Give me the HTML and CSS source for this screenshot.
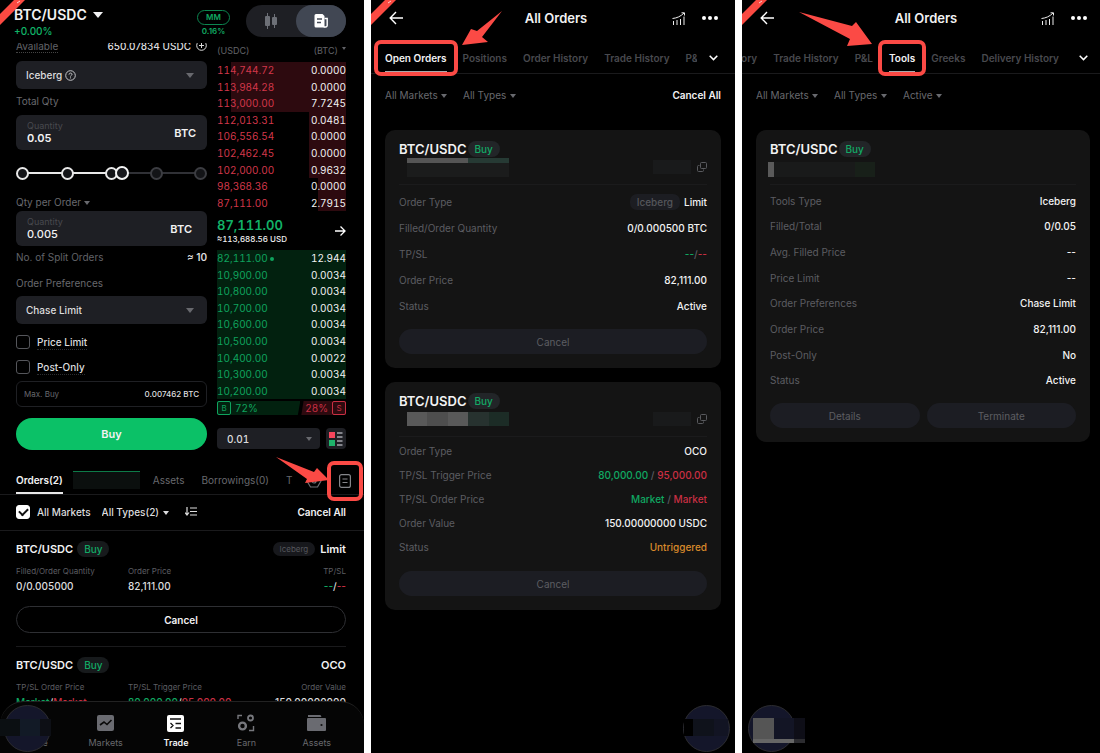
FILE: index.html
```html
<!DOCTYPE html>
<html lang="en">
<head>
  <meta charset="UTF-8" />
  <meta name="viewport" content="width=device-width, initial-scale=1.0"/>
  <title>Iceberg Orders Guide</title>
  <link rel="stylesheet" href="styles.css">
</head>
<body>

  <main class="screens">

    <!-- Trade screen -->
    <section class="screen trade">
      <svg class="ribbon" viewBox="0 0 26 26"><path d="M14 0H25L0 25V14Z" fill="#fb4a42"/><path d="M17 3l3-2" stroke="#ffd0cc"/></svg>

      <header class="trade-header">
        <div>
          <button class="pair-btn">BTC/USDC <span class="caret"></span></button>
          <div class="change">+0.00%</div>
        </div>
        <div class="mm"><span class="mm-pill">MM</span><span>0.16%</span></div>
        <div class="view-toggle">
          <button aria-label="Chart">
            <svg width="14" height="16" viewBox="0 0 14 16" fill="#6d7077"><rect x="1" y="3" width="5" height="10" rx="1"/><rect x="3" y="0" width="1" height="16"/><rect x="8" y="4" width="5" height="8" rx="1"/><rect x="10" y="1" width="1" height="14"/></svg>
          </button>
          <button class="active" aria-label="Order form">
            <svg width="16" height="16" viewBox="0 0 16 16"><path d="M3 1h6.500l2 2v11.500H3a1.500 1.500 0 0 1-1.500-1.500V2.500A1.500 1.500 0 0 1 3 1Z" fill="#fff"/><path d="M11.500 5.500h2.700v7a1.500 1.500 0 0 1-1.500 1.500h-2" fill="none" stroke="#fff" stroke-width="1.400"/><path d="M4 6h5M4 9.500h4" stroke="#454b57" stroke-width="1.300"/></svg>
          </button>
        </div>
      </header>

      <div class="trade-body">
        <div class="columns">
          <form class="order-form">
            <div class="line available">
              <span class="dotted">Available</span>
              <span class="bright">650.07834 USDC
                <svg width="11" height="11" viewBox="0 0 11 11" fill="none" stroke="#ddd"><circle cx="5.500" cy="5.500" r="4.800"/><path d="M5.500 3v5M3 5.500h5"/></svg>
              </span>
            </div>

            <div class="picker">
              <select aria-label="Order type"><option>Iceberg</option></select>
              <svg class="help" width="11" height="11" viewBox="0 0 11 11" fill="none" stroke="#c4c5c8"><circle cx="5.500" cy="5.500" r="4.800"/><path d="M4 4.600c0-2 3-2 3-.2 0 1-1.500 1-1.500 2.100M5.500 7.400v1"/></svg>
              <span class="caret dim"></span>
            </div>

            <div class="form-label">Total Qty</div>
            <div class="qty-box">
              <div class="qty-field"><label for="total">Quantity</label><input id="total" class="strong" value="0.05"></div>
              <span class="unit">BTC</span>
            </div>

            <div class="slider">
              <div class="ticks"><span class="on"></span><span class="on"></span><span class="on"></span><span></span><span></span></div>
              <input type="range" min="0" max="100" value="56" aria-label="Share of balance">
            </div>

            <button type="button" class="form-label per-order">Qty per Order <span class="caret small"></span></button>
            <div class="qty-box">
              <div class="qty-field"><label for="per">Quantity</label><input id="per" value="0.005"></div>
              <span class="unit unit-in">BTC</span>
            </div>

            <div class="line split"><span>No. of Split Orders</span><span class="bright">≈ 10</span></div>

            <div class="form-label prefs">Order Preferences</div>
            <div class="picker">
              <select aria-label="Order preferences"><option>Chase Limit</option></select>
              <span class="caret dim"></span>
            </div>

            <label class="check"><input type="checkbox"><span class="dotted">Price Limit</span></label>
            <label class="check"><input type="checkbox"><span class="dotted">Post-Only</span></label>

            <div class="max-buy"><span>Max. Buy</span><b>0.007462 BTC</b></div>
            <button type="button" class="buy-btn">Buy</button>
          </form>

          <div class="book">
            <table class="asks">
              <thead><tr><th>(USDC)</th><th>(BTC)<span class="caret tiny"></span></th></tr></thead>
              <tbody>
                <tr style="--depth: 89%"><td>114,744.72</td><td>0.0000</td></tr>
                <tr style="--depth: 89%"><td>113,984.28</td><td>0.0000</td></tr>
                <tr style="--depth: 89%"><td>113,000.00</td><td>7.7245</td></tr>
                <tr style="--depth: 29%"><td>112,013.31</td><td>0.0481</td></tr>
                <tr style="--depth: 29%"><td>106,556.54</td><td>0.0000</td></tr>
                <tr style="--depth: 29%"><td>102,462.45</td><td>0.0000</td></tr>
                <tr style="--depth: 29%"><td>102,000.00</td><td>0.9632</td></tr>
                <tr style="--depth: 22%"><td>98,368.36</td><td>0.0000</td></tr>
                <tr style="--depth: 22%"><td>87,111.00</td><td>2.7915</td></tr>
              </tbody>
            </table>

            <div class="last-price">
              <div><strong>87,111.00</strong><small>≈113,688.56 USD</small></div>
              <svg width="12" height="12" viewBox="0 0 12 12" fill="none" stroke="#fff" stroke-width="1.300"><path d="M1 6h10M6.500 1.500L11 6l-4.500 4.500"/></svg>
            </div>

            <table class="bids">
              <tbody>
                <tr><td>82,111.00 <span class="dot"></span></td><td>12.944</td></tr>
                <tr><td>10,900.00</td><td>0.0034</td></tr>
                <tr><td>10,800.00</td><td>0.0034</td></tr>
                <tr><td>10,700.00</td><td>0.0034</td></tr>
                <tr><td>10,600.00</td><td>0.0034</td></tr>
                <tr><td>10,500.00</td><td>0.0034</td></tr>
                <tr><td>10,400.00</td><td>0.0022</td></tr>
                <tr><td>10,300.00</td><td>0.0034</td></tr>
                <tr><td>10,200.00</td><td>0.0034</td></tr>
              </tbody>
            </table>

            <div class="ratio">
              <div class="ratio-buy"><i>B</i>72%</div>
              <div class="ratio-sell">28%<i>S</i></div>
            </div>

            <div class="book-tools">
              <div class="picker step">
                <select aria-label="Price step"><option>0.01</option></select>
                <span class="caret dim"></span>
              </div>
              <button class="layout-btn" aria-label="Book layout">
                <svg width="14" height="14" viewBox="0 0 14 14"><rect x="0" y="0" width="6" height="6" fill="#f6465d"/><rect x="0" y="8" width="6" height="6" fill="#1fb36b"/><path d="M8 1h5.500M8 5h5.500M8 9h5.500M8 13h5.500" stroke="#a5a7ac" stroke-width="1.300"/></svg>
              </button>
            </div>
          </div>
        </div>

        <nav class="order-tabs">
          <a href="#" class="active">Orders(2)</a>
          <span class="mask mask-tab"></span>
          <a href="#">Assets</a>
          <a href="#">Borrowings(0)</a>
          <a href="#">T</a>
          <button class="hex" aria-label="Settings">
            <svg width="16" height="14" viewBox="0 0 16 14" fill="none" stroke="#6d6e73" stroke-width="1.200"><path d="M4.500 1h7L15 7l-3.500 6h-7L1 7Z"/><circle cx="8" cy="7" r="2"/></svg>
          </button>
          <button class="all-orders marked" aria-label="All orders">
            <svg width="12" height="14" viewBox="0 0 12 14" fill="none" stroke="#85868a" stroke-width="1.200"><rect x=".6" y=".6" width="10.800" height="12.800" rx="2"/><path d="M3.500 5h5M3.500 8.500h5"/></svg>
          </button>
        </nav>

        <div class="order-filter">
          <label class="check"><input type="checkbox" checked><span>All Markets</span></label>
          <label class="inline-select"><select aria-label="Types"><option>All Types(2)</option></select><span class="caret small"></span></label>
          <button aria-label="Sort">
            <svg width="12" height="9" viewBox="0 0 12 9" fill="none" stroke="#ddd" stroke-width="1.200"><path d="M2 0v8M0 5.500L2 8l2-2.500M5 1h7M5 4.500h7M5 8h7"/></svg>
          </button>
          <button class="cancel-all">Cancel All</button>
        </div>

        <article class="order">
          <div class="order-title"><b>BTC/USDC</b><span class="buy">Buy</span><span class="kind">Iceberg</span><b>Limit</b></div>
          <dl class="order-facts">
            <div><dt>Filled/Order Quantity</dt><dd>0/0.005000</dd></div>
            <div><dt>Order Price</dt><dd>82,111.00</dd></div>
            <div><dt>TP/SL</dt><dd><span class="green">--</span>/<span class="red">--</span></dd></div>
          </dl>
          <button class="cancel-outline">Cancel</button>
        </article>

        <article class="order">
          <div class="order-title"><b>BTC/USDC</b><span class="buy">Buy</span><b class="end">OCO</b></div>
          <dl class="order-facts">
            <div><dt>TP/SL Order Price</dt><dd><span class="green">Market</span>/<span class="red">Market</span></dd></div>
            <div><dt>TP/SL Trigger Price</dt><dd><span class="green">80,000.00</span>/<span class="red">95,000.00</span></dd></div>
            <div><dt>Order Value</dt><dd>150.00000000</dd></div>
          </dl>
        </article>
      </div>

      <nav class="bottom-nav">
        <a href="#"><span class="nav-icon"></span>Home</a>
        <a href="#">
          <svg width="18" height="18" viewBox="0 0 18 18"><rect x="0" y="1" width="17" height="16" rx="2" fill="#6a6b71"/><path d="M3 11l4-3 3 2.500L14.500 6" fill="none" stroke="#0a0a0a" stroke-width="1.600"/></svg>
          Markets
        </a>
        <a href="#" class="active">
          <svg width="18" height="18" viewBox="0 0 18 18"><rect x="0" y="1" width="17" height="17" rx="2" fill="#fff"/><path d="M3 5h11M8.500 9.500H14M8.500 14H14M3.500 9L6 11.500 3.500 14" fill="none" stroke="#111" stroke-width="1.300"/></svg>
          Trade
        </a>
        <a href="#">
          <svg width="18" height="18" viewBox="0 0 18 18" fill="none" stroke="#77787d"><circle cx="5.500" cy="12" r="3.400" stroke-width="2.400"/><circle cx="13.500" cy="4" r="2.500" stroke-width="1.800"/><path d="M1 5V1.500h4M16.500 12v4.500H12" stroke-width="1.400"/></svg>
          Earn
        </a>
        <a href="#">
          <svg width="20" height="18" viewBox="0 0 20 18"><path d="M1 1h12.500l1 2H1Z" fill="#6a6b71"/><rect x="0" y="4" width="19" height="13" rx="1" fill="#6a6b71"/><circle cx="14.500" cy="11" r="1.100" fill="#111"/></svg>
          Assets
        </a>
      </nav>

      <div class="bubble bubble-home"><span class="mask"></span></div>
      <svg class="arrow arrow-trade" viewBox="0 0 53 27"><path d="M0 0L38 15 41 11 53 23 29 26 31 22Z"/></svg>
    </section>

    <!-- All orders: open -->
    <section class="screen">
      <svg class="ribbon" viewBox="0 0 26 26"><path d="M14 0H25L0 25V14Z" fill="#fb4a42"/><path d="M17 3l3-2" stroke="#ffd0cc"/></svg>

      <header class="page-header">
        <a href="#" aria-label="Back"><svg width="15" height="14" viewBox="0 0 15 14" fill="none" stroke="#fff" stroke-width="1.400"><path d="M14 7H1.500M7 1L1.200 7 7 13"/></svg></a>
        <h1>All Orders</h1>
        <button aria-label="Statistics"><svg width="14" height="13" viewBox="0 0 14 13" fill="none" stroke="#eee"><path d="M1.500 9v4M5 8v5M8.500 7v6M12 4.500V13M.5 6.500C5 6 8.500 4.500 12 1M9.500.8h3v2.700"/></svg></button>
        <button aria-label="More"><svg width="18" height="4" viewBox="0 0 18 4" fill="#fff"><circle cx="3" cy="2" r="2"/><circle cx="9" cy="2" r="2"/><circle cx="15" cy="2" r="2"/></svg></button>
      </header>

      <nav class="page-tabs">
        <div class="tab-strip">
          <a href="#" class="active marked">Open Orders</a>
          <a href="#">Positions</a>
          <a href="#">Order History</a>
          <a href="#">Trade History</a>
          <a href="#">P&amp;L</a>
        </div>
        <button aria-label="More tabs"><svg width="9" height="6" viewBox="0 0 9 6" fill="none" stroke="#fff" stroke-width="1.500"><path d="M.7.8l3.800 3.800L8.300.8"/></svg></button>
      </nav>

      <div class="page-filter">
        <label class="inline-select"><select aria-label="Markets"><option>All Markets</option></select><span class="caret small"></span></label>
        <label class="inline-select"><select aria-label="Types"><option>All Types</option></select><span class="caret small"></span></label>
        <button class="cancel-all">Cancel All</button>
      </div>

      <div class="cards">
        <article class="card">
          <div class="card-title"><b>BTC/USDC</b><span class="buy">Buy</span></div>
          <div class="card-meta">
            <span class="mask mask-thin"></span>
            <span class="mask mask-right"></span>
            <button aria-label="Copy"><svg width="10" height="10" viewBox="0 0 10 10" fill="none" stroke="#595a5e"><rect x="3.500" y=".5" width="6" height="6" rx="1"/><path d="M2.500 3.500h-1a1 1 0 0 0-1 1v4a1 1 0 0 0 1 1h4a1 1 0 0 0 1-1v-1"/></svg></button>
          </div>
          <dl class="details">
            <div><dt>Order Type</dt><dd><span class="kind">Iceberg</span>Limit</dd></div>
            <div><dt>Filled/Order Quantity</dt><dd>0/0.000500 BTC</dd></div>
            <div><dt>TP/SL</dt><dd class="slash"><span class="green">--</span>/<span class="red">--</span></dd></div>
            <div><dt>Order Price</dt><dd>82,111.00</dd></div>
            <div><dt>Status</dt><dd>Active</dd></div>
          </dl>
          <div class="card-actions"><button>Cancel</button></div>
        </article>

        <article class="card">
          <div class="card-title"><b>BTC/USDC</b><span class="buy">Buy</span></div>
          <div class="card-meta">
            <span class="mask mask-full"></span>
            <span class="mask mask-right"></span>
            <button aria-label="Copy"><svg width="10" height="10" viewBox="0 0 10 10" fill="none" stroke="#595a5e"><rect x="3.500" y=".5" width="6" height="6" rx="1"/><path d="M2.500 3.500h-1a1 1 0 0 0-1 1v4a1 1 0 0 0 1 1h4a1 1 0 0 0 1-1v-1"/></svg></button>
          </div>
          <dl class="details tight">
            <div><dt>Order Type</dt><dd>OCO</dd></div>
            <div><dt>TP/SL Trigger Price</dt><dd class="slash"><span class="green">80,000.00</span> / <span class="red">95,000.00</span></dd></div>
            <div><dt>TP/SL Order Price</dt><dd class="slash"><span class="green">Market</span> / <span class="red">Market</span></dd></div>
            <div><dt>Order Value</dt><dd>150.00000000 USDC</dd></div>
            <div><dt>Status</dt><dd class="orange">Untriggered</dd></div>
          </dl>
          <div class="card-actions"><button>Cancel</button></div>
        </article>
      </div>

      <div class="bubble bubble-right"><span class="mask"></span></div>
      <svg class="arrow arrow-open" viewBox="0 0 40 34"><path d="M40 0L20 26 26 31 0 34 9 18 15 20Z"/></svg>
    </section>

    <!-- All orders: tools -->
    <section class="screen tools">
      <svg class="ribbon" viewBox="0 0 26 26"><path d="M14 0H25L0 25V14Z" fill="#fb4a42"/><path d="M17 3l3-2" stroke="#ffd0cc"/></svg>

      <header class="page-header">
        <a href="#" aria-label="Back"><svg width="15" height="14" viewBox="0 0 15 14" fill="none" stroke="#fff" stroke-width="1.400"><path d="M14 7H1.500M7 1L1.200 7 7 13"/></svg></a>
        <h1>All Orders</h1>
        <button aria-label="Statistics"><svg width="14" height="13" viewBox="0 0 14 13" fill="none" stroke="#eee"><path d="M1.500 9v4M5 8v5M8.500 7v6M12 4.500V13M.5 6.500C5 6 8.500 4.500 12 1M9.500.8h3v2.700"/></svg></button>
        <button aria-label="More"><svg width="18" height="4" viewBox="0 0 18 4" fill="#fff"><circle cx="3" cy="2" r="2"/><circle cx="9" cy="2" r="2"/><circle cx="15" cy="2" r="2"/></svg></button>
      </header>

      <nav class="page-tabs">
        <div class="tab-strip scrolled">
          <a href="#">Order History</a>
          <a href="#">Trade History</a>
          <a href="#">P&amp;L</a>
          <a href="#" class="active marked">Tools</a>
          <a href="#">Greeks</a>
          <a href="#">Delivery History</a>
        </div>
        <button aria-label="More tabs"><svg width="9" height="6" viewBox="0 0 9 6" fill="none" stroke="#fff" stroke-width="1.500"><path d="M.7.8l3.800 3.800L8.300.8"/></svg></button>
      </nav>

      <div class="page-filter">
        <label class="inline-select"><select aria-label="Markets"><option>All Markets</option></select><span class="caret small"></span></label>
        <label class="inline-select"><select aria-label="Types"><option>All Types</option></select><span class="caret small"></span></label>
        <label class="inline-select"><select aria-label="Status"><option>Active</option></select><span class="caret small"></span></label>
      </div>

      <div class="cards">
        <article class="card">
          <div class="card-title"><b>BTC/USDC</b><span class="buy">Buy</span></div>
          <div class="card-meta"><span class="mask mask-tools"></span></div>
          <dl class="details long">
            <div><dt>Tools Type</dt><dd>Iceberg</dd></div>
            <div><dt>Filled/Total</dt><dd>0/0.05</dd></div>
            <div><dt>Avg. Filled Price</dt><dd>--</dd></div>
            <div><dt>Price Limit</dt><dd>--</dd></div>
            <div><dt>Order Preferences</dt><dd>Chase Limit</dd></div>
            <div><dt>Order Price</dt><dd>82,111.00</dd></div>
            <div><dt>Post-Only</dt><dd>No</dd></div>
            <div><dt>Status</dt><dd>Active</dd></div>
          </dl>
          <div class="card-actions"><button>Details</button><button>Terminate</button></div>
        </article>
      </div>

      <div class="bubble bubble-left"><span class="mask"></span></div>
      <svg class="arrow arrow-tools" viewBox="0 0 74 35"><path d="M0 0L53 14 57 10 73 32 48 34 51 27Z"/></svg>
    </section>

  </main>

</body>
</html>
```

FILE: styles.css
```css
* {
  box-sizing: border-box;
}

body {
  margin: 0;
  background: #fff;
  color: #f2f2f3;
  font-family: Inter, "Liberation Sans", sans-serif;
  font-size: 10px;
  line-height: 14px;
}

a {
  color: inherit;
  text-decoration: none;
}

button, select, input {
  margin: 0;
  padding: 0;
  border: none;
  background: none;
  color: inherit;
  font: inherit;
}

button {
  cursor: pointer;
}

select {
  appearance: none;
}

svg {
  display: block;
}

dl, dd, h1 {
  margin: 0;
}

.screens {
  display: grid;
  grid-template-columns: 364fr 364fr 358fr;
  gap: 7px;
}

.screen {
  position: relative;
  min-width: 0;
  height: 100vh;
  overflow: hidden;
  background: #000;
}

.ribbon {
  position: absolute;
  top: 0;
  left: 0;
  width: 26px;
  height: 26px;
}

.green { color: #10a862; }
.red { color: #c92f43; }
.orange { color: #d98a2b; }

.caret {
  display: inline-block;
  border: 4px solid transparent;
  border-top: 5px solid currentColor;
  border-bottom: 0;
  vertical-align: middle;
}

.caret.dim { color: #68696e; }

.caret.small {
  border-width: 4px 3px 0;
}

.caret.tiny {
  border-width: 3px 2px 0;
}

/* ---------- trade ---------- */

.trade-header {
  display: flex;
  height: 43px;
  padding: 5px 18px 0 14px;
}

.pair-btn {
  display: block;
  font-size: 14px;
  line-height: 20px;
  font-weight: 600;
}

.pair-btn .caret {
  margin: 0 0 3px 3px;
  border-width: 6px 5px 0;
}

.change {
  line-height: 12px;
  font-weight: 500;
  color: #10b568;
}

.mm {
  display: flex;
  flex-direction: column;
  align-items: center;
  margin: 5px 16px 0 auto;
  font-size: 8px;
  line-height: 12px;
  font-weight: 600;
  color: #10a862;
}

.mm-pill {
  width: 33px;
  border: 1px solid #0c8650;
  border-radius: 8px;
  text-align: center;
  line-height: 13px;
}

.view-toggle {
  display: flex;
  width: 100px;
  height: 32px;
  border-radius: 16px;
  background: #1e1f24;
}

.view-toggle button {
  display: flex;
  flex: 1;
  align-items: center;
  justify-content: center;
  border-radius: 16px;
}

.view-toggle .active {
  background: #414753;
}

.trade-body {
  overflow: hidden;
}

.columns {
  display: grid;
  grid-template-columns: 191fr 129fr;
  gap: 10px;
  margin-top: -3px;
  padding: 0 18px 0 16px;
}

.line {
  display: flex;
  justify-content: space-between;
  color: #626368;
}

.available {
  line-height: 12px;
}

.available .bright {
  display: flex;
  gap: 5px;
}

.dotted {
  border-bottom: 1px dotted #444;
}

.bright {
  color: #dcdcde;
  font-weight: 500;
}

.picker {
  position: relative;
  display: flex;
  align-items: center;
  height: 28px;
  margin-top: 8px;
  border-radius: 6px;
  background: #1e1f24;
}

.picker select {
  width: 100%;
  height: 100%;
  padding: 0 10px;
  font-weight: 500;
  color: #dcdcde;
}

.picker .caret {
  position: absolute;
  right: 13px;
  pointer-events: none;
}

.picker .help {
  position: absolute;
  left: 49px;
}

.form-label {
  display: block;
  margin-top: 5px;
  color: #68696e;
}

.qty-box {
  display: flex;
  align-items: center;
  justify-content: space-between;
  height: 35px;
  margin-top: 7px;
  padding: 0 11px;
  border-radius: 6px;
  background: #1e1f24;
}

.qty-field {
  display: flex;
  flex-direction: column;
  min-width: 0;
}

.qty-field label {
  font-size: 9px;
  line-height: 10px;
  color: #48494e;
}

.qty-field input {
  width: 100%;
  height: 14px;
  font-size: 11px;
  font-weight: 500;
}

.qty-field .strong {
  font-weight: 600;
}

.unit {
  font-size: 11px;
  font-weight: 600;
}

.unit-in {
  margin-right: 4px;
}

.slider {
  position: relative;
  height: 14px;
  margin: 16px 0 15px;
  background: linear-gradient(to right, #e8e8e8 56%, #303136 56%) center / calc(100% - 14px) 2px no-repeat;
}

.ticks {
  position: absolute;
  inset: 0;
  display: flex;
  align-items: center;
  justify-content: space-between;
}

.ticks span {
  width: 13px;
  height: 13px;
  border: 2px solid #3c3d42;
  border-radius: 50%;
  background: #131417;
}

.ticks .on {
  border-color: #e8e8e8;
}

.slider input {
  position: relative;
  display: block;
  width: 100%;
  height: 14px;
  appearance: none;
}

.slider input::-webkit-slider-thumb {
  appearance: none;
  width: 14px;
  height: 14px;
  border: 2px solid #f4f4f4;
  border-radius: 50%;
  background: #17181c;
}

.per-order {
  margin-top: 0;
}

.per-order + .qty-box {
  margin-top: 2px;
}

.split {
  margin-top: 4px;
}

.split .bright {
  font-weight: 600;
}

.prefs {
  margin-top: 12px;
}

.prefs + .picker {
  margin-top: 6px;
}

.check {
  display: flex;
  align-items: center;
  gap: 7px;
  height: 14px;
  margin-top: 11px;
  font-weight: 500;
  color: #dcdcde;
}

.check .dotted {
  border-color: #2c2d30;
}

.check input {
  width: 14px;
  height: 14px;
  appearance: none;
  border: 1px solid #55565b;
  border-radius: 3px;
}

.check input:checked {
  display: grid;
  place-items: center;
  border-color: #fff;
  background: #fff;
}

.check input:checked::after {
  content: "";
  width: 7px;
  height: 4px;
  margin-bottom: 2px;
  border: solid #111;
  border-width: 0 0 2px 2px;
  transform: rotate(-45deg);
}

.max-buy {
  display: flex;
  align-items: center;
  justify-content: space-between;
  height: 26px;
  margin-top: 7px;
  padding: 0 7px;
  border: 1px solid #1f2024;
  border-radius: 6px;
  font-size: 8px;
  color: #68696e;
}

.max-buy b {
  color: #dcdcde;
  font-weight: 500;
}

.buy-btn {
  width: 100%;
  height: 32px;
  margin-top: 11px;
  border-radius: 16px;
  background: #0bc167;
  font-size: 11px;
  font-weight: 600;
}

/* order book */

.book {
  font-variant-numeric: tabular-nums;
}

.book table {
  width: 100%;
  border-collapse: collapse;
  line-height: 16px;
}

.book th {
  height: 22px;
  padding: 0;
  font-size: 9px;
  font-weight: 400;
  text-align: left;
  color: #626368;
}

.book th .caret {
  margin: 0 0 6px 4px;
}

.book td {
  padding: 0;
}

.book th:last-child,
.book td:last-child {
  text-align: right;
}

.asks {
  height: 171px;
}

.asks tbody tr {
  background: linear-gradient(to left, #2d0a0f var(--depth), transparent 0);
}

.asks td:first-child {
  color: #d2374a;
}

.bids {
  height: 149px;
  background: #02210f;
}

.bids td:first-child {
  color: #0fa35e;
}

.dot {
  display: inline-block;
  width: 4px;
  height: 4px;
  margin-bottom: 2px;
  border-radius: 50%;
  background: #0fa35e;
  vertical-align: middle;
}

.last-price {
  display: flex;
  align-items: center;
  justify-content: space-between;
  height: 39px;
}

.last-price strong {
  display: block;
  font-size: 13px;
  line-height: 16px;
  font-weight: 600;
  color: #12b268;
}

.last-price small {
  display: block;
  font-size: 8px;
  line-height: 12px;
  font-weight: 500;
}

.ratio {
  display: flex;
  gap: 1px;
  height: 14px;
  margin-top: 2px;
}

.ratio div {
  display: flex;
  align-items: center;
  gap: 4px;
}

.ratio i {
  width: 14px;
  height: 14px;
  border: 1px solid currentColor;
  border-radius: 2px;
  font-size: 8px;
  line-height: 12px;
  font-style: normal;
  text-align: center;
}

.ratio-buy {
  flex: 84;
  background: #02210f;
  color: #0fa35e;
  clip-path: polygon(0 0, 100% 0, 97% 100%, 0 100%);
}

.ratio-sell {
  flex: 45;
  justify-content: flex-end;
  background: #2d0a0f;
  color: #c92f43;
  clip-path: polygon(5% 0, 100% 0, 100% 100%, 0 100%);
}

.book-tools {
  display: flex;
  gap: 6px;
  margin-top: 13px;
}

.picker.step {
  flex: 1;
  height: 21px;
  margin-top: 0;
  border-radius: 4px;
}

.picker.step .caret {
  right: 8px;
  border-width: 4px 3px 0;
}

.layout-btn {
  display: flex;
  align-items: center;
  justify-content: center;
  width: 20px;
  height: 21px;
  border-radius: 4px;
  background: #1e1f24;
}

/* orders list */

.order-tabs {
  display: flex;
  align-items: flex-end;
  height: 45px;
  padding: 0 13px 0 16px;
  border-bottom: 1px solid #1a1a1c;
  color: #68696e;
}

.order-tabs a {
  margin-right: 17px;
  padding-bottom: 7px;
}

.order-tabs .active {
  margin-right: 10px;
  padding-bottom: 5px;
  border-bottom: 2px solid #e8e8e8;
  font-weight: 600;
  color: #f2f2f3;
}

.order-tabs a:last-of-type {
  margin-right: 0;
}

.mask-tab {
  width: 67px;
  height: 18px;
  margin: 0 13px 5px 0;
  border-top: 1px solid #0d7a48;
  background: #0b0f0e;
}

.hex {
  margin: 0 17px 6px auto;
}

.all-orders {
  padding-bottom: 6px;
}

/* red frame round the control to tap */
.marked {
  position: relative;
}

.marked::after {
  content: "";
  position: absolute;
  inset: -11px -11px -5px -11px;
  border: 4px solid #fb4a45;
  border-radius: 7px;
  pointer-events: none;
}

.all-orders.marked::after {
  inset: -13px -12px -7px -12px;
}

.order-filter {
  display: flex;
  align-items: center;
  height: 36px;
  padding: 0 18px 2px 16px;
  border-bottom: 1px solid #1a1a1c;
}

.order-filter .check {
  margin: 0 11px 0 0;
}

.order-filter .inline-select {
  margin-right: 16px;
  font-weight: 500;
  color: #dcdcde;
}

.cancel-all {
  margin-left: auto;
  font-weight: 600;
}

.inline-select .caret {
  margin-left: 3px;
}

.order {
  margin: 0 18px 0 16px;
  padding: 9px 0 13px;
  border-bottom: 1px solid #1a1a1c;
}

.order-title {
  display: flex;
  align-items: center;
  height: 18px;
  font-size: 11px;
}

.order-title b {
  font-weight: 600;
}

.buy {
  margin-left: 4px;
  padding: 0 7px;
  border-radius: 8px;
  background: #171a1c;
  font-size: 10px;
  line-height: 16px;
  font-weight: 500;
  color: #12a965;
}

.kind {
  margin: 0 5px 0 auto;
  padding: 0 7px;
  border-radius: 7px;
  background: #17181c;
  font-size: 8px;
  line-height: 14px;
  color: #55565b;
}

.end {
  margin-left: auto;
}

.order-facts {
  display: grid;
  grid-template-columns: 112px 1fr auto;
  margin-top: 7px;
}

.order-facts dt {
  font-size: 8px;
  line-height: 12px;
  color: #5c5d62;
}

.order-facts dd {
  margin-top: 3px;
  line-height: 12px;
  font-weight: 500;
  color: #dcdcde;
}

.order-facts div:last-child {
  text-align: right;
}

.cancel-outline {
  width: 100%;
  height: 27px;
  margin-top: 14px;
  border: 1px solid #2e2f33;
  border-radius: 14px;
  font-weight: 600;
}

.bottom-nav {
  position: absolute;
  left: 0;
  right: 0;
  bottom: 0;
  display: flex;
  height: 52px;
  padding: 12px 12px 0 0;
  border-top: 1px solid #222;
  border-radius: 24px 24px 0 0;
  background: #050505;
}

.bottom-nav a {
  display: flex;
  flex: 1;
  flex-direction: column;
  align-items: center;
  gap: 4px;
  font-size: 9px;
  line-height: 14px;
  color: #68696e;
}

.bottom-nav .active {
  font-weight: 600;
  color: #f2f2f3;
}

.nav-icon {
  height: 18px;
}

/* ---------- all orders ---------- */

.page-header {
  display: grid;
  grid-template-columns: 66px 1fr 44px 18px;
  align-items: center;
  height: 36px;
  padding: 0 16px 0 18px;
}

.page-header h1 {
  font-size: 13px;
  line-height: 18px;
  font-weight: 600;
  text-align: center;
}

.page-header button {
  justify-self: center;
}

.page-tabs {
  display: flex;
  height: 38px;
  padding: 0 17px 0 14px;
  border-bottom: 1px solid #1a1a1c;
}

.tab-strip {
  display: flex;
  flex: 1;
  gap: 16px;
  align-items: flex-end;
  min-width: 0;
  margin-right: 12px;
  white-space: nowrap;
  color: #48494e;
  font-weight: 600;
  /* cut the last tab at the edge, leave the marker free above and below */
  clip-path: inset(-20px 0 -20px -20px);
}

.tab-strip a {
  padding-bottom: 8px;
}

.tab-strip .active {
  padding-bottom: 6px;
  border-bottom: 2px solid #a9a9ac;
  color: #f2f2f3;
}

.tab-strip.scrolled {
  justify-content: flex-end;
  margin-right: 20px;
}

.page-tabs button {
  align-self: flex-end;
  padding-bottom: 12px;
}

.page-filter {
  display: flex;
  gap: 16px;
  align-items: center;
  height: 42px;
  padding: 0 14px;
  color: #68696e;
}

.page-filter .cancel-all {
  color: #f2f2f3;
}

.cards {
  display: flex;
  flex-direction: column;
  gap: 14px;
  padding: 14px 14px 0;
}

/* this screen runs a little closer to the right edge */
.tools .page-header { padding-right: 12px; }
.tools .page-tabs { padding-right: 12px; }
.tools .cards { padding-right: 10px; }

.card {
  padding: 10px 14px 14px;
  border-radius: 10px;
  background: #141414;
}

.card-title {
  display: flex;
  align-items: center;
  height: 18px;
  font-size: 13px;
}

.card-title b {
  font-weight: 600;
}

.card-title .buy {
  margin-left: 1px;
  background: #222528;
}

.card-meta {
  display: flex;
  align-items: center;
  height: 27px;
  padding-bottom: 8px;
  border-bottom: 1px solid #1b1b1c;
}

.mask {
  display: block;
}

.mask-thin,
.mask-full {
  width: 102px;
  height: 19px;
  margin-left: 8px;
  background: linear-gradient(#555, #555) 0 0 / 61px 5px no-repeat,
              linear-gradient(#263a34, #263a34) 61px 0 / 41px 5px no-repeat, #1b1c1c;
}

.mask-full {
  height: 14px;
  background: linear-gradient(to right, #595959 0 20px, #4e4e4e 20px 41px, #595959 41px 61px, #27322f 61px 82px, #1c2c26 82px);
}

.mask-right {
  width: 38px;
  height: 14px;
  margin-left: auto;
  margin-right: 6px;
  background: #191a1b;
}

.mask-tools {
  width: 107px;
  height: 15px;
  margin-top: 4px;
  margin-left: -2px;
  background: linear-gradient(to right, #5a5a5a 0 6px, #191a1a 6px 87px, #182019 87px);
}

.details {
  padding-top: 4px;
}

.details div {
  display: flex;
  align-items: center;
  justify-content: space-between;
  height: 26px;
}

.details.tight {
  padding: 2px 0;
}

.details.tight div {
  height: 24px;
}

.details.long {
  display: flex;
  flex-direction: column;
  height: 208px;
  padding-top: 3px;
}

.details.long div {
  flex: 1;
  height: auto;
}

.details dt {
  color: #5c5d62;
}

.details dd {
  font-weight: 500;
}

.details .slash {
  color: #5c5d62;
}

.details .green { color: #10a862; }
.details .red { color: #c92f43; }
.details .orange { color: #d98a2b; }

.details .kind {
  display: inline-block;
  margin-right: 4px;
  font-size: 10px;
  line-height: 16px;
  background: #1c1d22;
}

.card-actions {
  display: flex;
  gap: 7px;
  margin-top: 10px;
}

.card-actions button {
  flex: 1;
  height: 25px;
  border-radius: 13px;
  background: #1c1d23;
  color: #5c5d62;
}

/* floating assistant bubble, partly covered */

.bubble {
  position: absolute;
  bottom: 1px;
  width: 47px;
  height: 47px;
  border: 1px solid #2c2c30;
  border-radius: 50%;
  background: #14162a;
}

.bubble .mask {
  position: absolute;
  top: 13px;
  left: 0;
  width: 44px;
  height: 17px;
  background: linear-gradient(to right, #000 0 9px, #0f121b 9px 30px, #121423 30px);
}

.bubble-home { left: 4px; }
.bubble-right { right: 5px; }
.bubble-left { left: 6px; }

.bubble-home .mask {
  left: -5px;
  width: 51px;
  background: linear-gradient(to right, #0b0f12 0 20px, #121a26 20px 40px, #0d0f15 40px);
}

.bubble-left .mask {
  top: 12px;
  left: 4px;
  width: 52px;
  height: 25px;
  background: linear-gradient(to right, #666 41px, #2c2c30 41px) 0 100% / 100% 4px no-repeat,
              linear-gradient(to right, #555 0 21px, #131525 21px 41px, #0e0e17 41px);
}

/* pointer arrows */

.arrow {
  position: absolute;
  fill: #fb4a45;
}

.arrow-trade {
  top: 457px;
  left: 276px;
  width: 53px;
}

.arrow-open {
  top: 11px;
  left: 91px;
  width: 40px;
}

.arrow-tools {
  top: 12px;
  left: 57px;
  width: 74px;
}
```
